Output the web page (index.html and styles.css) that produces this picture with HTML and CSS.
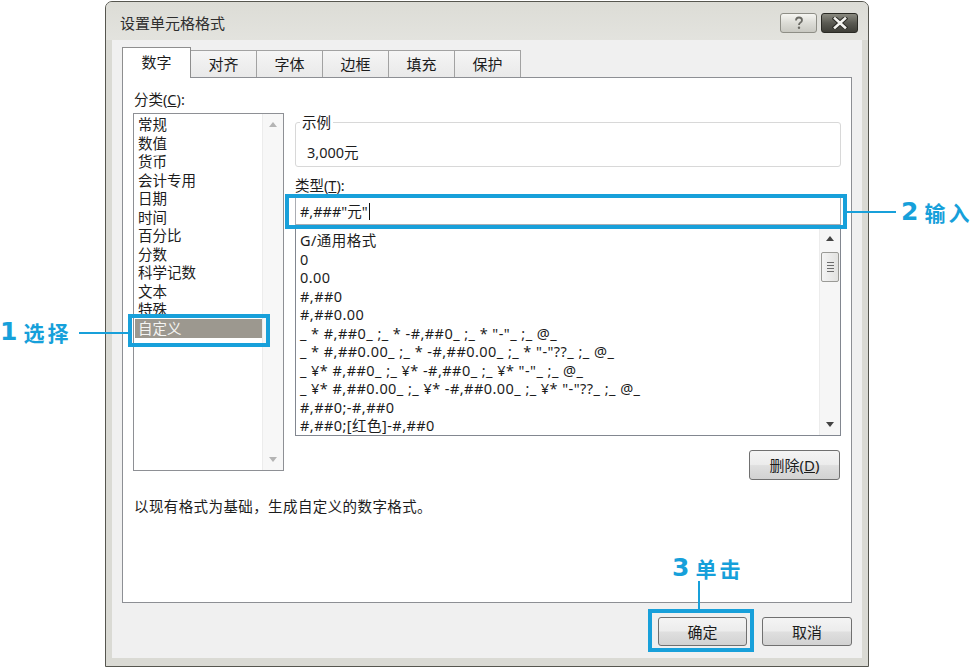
FILE: index.html
```html
<!DOCTYPE html>
<html lang="zh-CN">
<head>
<meta charset="utf-8">
<title>设置单元格格式</title>
<link rel="stylesheet" href="styles.css">
</head>
<body>
<div class="stage">
  <div class="window">
    <div class="titlebar">
      <div class="title">设置单元格格式</div>
      <div class="tbtn help">
        <svg width="12" height="14" viewBox="0 0 12 14"><path d="M3 4.5 Q3 1.5 6 1.5 Q9 1.5 9 4.2 Q9 6 7 7 Q6 7.6 6 9" fill="none" stroke="#6a6a64" stroke-width="1.8"/><circle cx="6" cy="11.8" r="1.2" fill="#6a6a64"/></svg>
      </div>
      <div class="tbtn close">
        <svg width="16" height="12" viewBox="0 0 16 12"><path d="M3 1.5 L13 10.5 M13 1.5 L3 10.5" stroke="#2c2c26" stroke-width="4.6" stroke-linecap="square"/><path d="M3 1.5 L13 10.5 M13 1.5 L3 10.5" stroke="#f4f4f0" stroke-width="2.6" stroke-linecap="square"/></svg>
      </div>
    </div>
    <div class="client">
      <div class="tabs">
        <div class="tab active">数字</div>
        <div class="tab">对齐</div>
        <div class="tab">字体</div>
        <div class="tab">边框</div>
        <div class="tab">填充</div>
        <div class="tab">保护</div>
      </div>
      <div class="panel">
        <div class="label">分类(<u>C</u>):</div>
        <div class="cols">
          <div class="catlist">
            <div class="items">
              <div class="item">常规</div>
              <div class="item">数值</div>
              <div class="item">货币</div>
              <div class="item">会计专用</div>
              <div class="item">日期</div>
              <div class="item">时间</div>
              <div class="item">百分比</div>
              <div class="item">分数</div>
              <div class="item">科学记数</div>
              <div class="item">文本</div>
              <div class="item">特殊</div>
              <div class="item sel">自定义</div>
            </div>
            <div class="vscroll light">
              <div class="arrow"><svg width="8" height="5" viewBox="0 0 8 5"><path d="M0 5 L4 0 L8 5Z" fill="#b4b4b4"/></svg></div>
              <div class="track"></div>
              <div class="arrow"><svg width="8" height="5" viewBox="0 0 8 5"><path d="M0 0 L4 5 L8 0Z" fill="#b4b4b4"/></svg></div>
            </div>
          </div>
          <div class="right">
            <fieldset class="sample">
              <legend>示例</legend>
              <div class="value">3,000元</div>
            </fieldset>
            <div class="label typelabel">类型(<u>T</u>):</div>
            <div class="input">#,###"元"<span class="caret"></span></div>
            <div class="fmtlist">
              <div class="fitems">
                <div class="fitem">G/通用格式</div>
                <div class="fitem">0</div>
                <div class="fitem">0.00</div>
                <div class="fitem">#,##0</div>
                <div class="fitem">#,##0.00</div>
                <div class="fitem">_ * #,##0_ ;_ * -#,##0_ ;_ * "-"_ ;_ @_</div>
                <div class="fitem">_ * #,##0.00_ ;_ * -#,##0.00_ ;_ * "-"??_ ;_ @_</div>
                <div class="fitem">_ ¥* #,##0_ ;_ ¥* -#,##0_ ;_ ¥* "-"_ ;_ @_</div>
                <div class="fitem">_ ¥* #,##0.00_ ;_ ¥* -#,##0.00_ ;_ ¥* "-"??_ ;_ @_</div>
                <div class="fitem">#,##0;-#,##0</div>
                <div class="fitem">#,##0;[红色]-#,##0</div>
              </div>
              <div class="vscroll">
                <div class="arrow"><svg width="8" height="5" viewBox="0 0 8 5"><path d="M0 5 L4 0 L8 5Z" fill="#444"/></svg></div>
                <div class="track">
                  <div class="thumb"><span></span><span></span><span></span><span></span></div>
                </div>
                <div class="arrow"><svg width="8" height="5" viewBox="0 0 8 5"><path d="M0 0 L4 5 L8 0Z" fill="#444"/></svg></div>
              </div>
            </div>
            <div class="btn delete">删除(<u>D</u>)</div>
          </div>
        </div>
        <div class="desc">以现有格式为基础，生成自定义的数字格式。</div>
      </div>
      <div class="buttons">
        <div class="btn ok">确定</div>
        <div class="btn cancel">取消</div>
      </div>
    </div>
  </div>

  <div class="hl hl1"></div>
  <div class="hline hline1"></div>
  <div class="anno anno1"><span class="num">1</span><span class="word">选择</span></div>

  <div class="hl hl2"></div>
  <div class="hline hline2"></div>
  <div class="anno anno2"><span class="num">2</span><span class="word">输入</span></div>

  <div class="hl hl3"></div>
  <div class="vline vline3"></div>
  <div class="anno anno3"><span class="num">3</span><span class="word">单击</span></div>
</div>
</body>
</html>
```
FILE: styles.css
```css
* { box-sizing: border-box; }
body {
  margin: 0;
  background: #fff;
  font-family: "Noto Sans", "Noto Sans CJK SC", sans-serif;
  color: #1c1c1c;
}
.stage {
  position: relative;
  width: 973px;
  height: 668px;
  overflow: hidden;
  background: #fff;
}
.window {
  margin: 1px 0 0 105px;
  width: 764px;
  height: 666px;
  border: 1px solid #56564f;
  border-radius: 7px 7px 0 0;
  background: #dadad4;
  padding: 0 6px 8px 6px;
  display: flex;
  flex-direction: column;
}
.titlebar {
  height: 38px;
  display: flex;
  align-items: flex-start;
  gap: 4px;
  background: linear-gradient(#dcdcd6, #e3e3de);
  margin: 0 -6px;
  padding-left: 14px;
  padding-right: 10px;
  border-radius: 6px 6px 0 0;
}
.title {
  flex: 1;
  font-size: 15px;
  line-height: 18px;
  margin-top: 12px;
  color: #2e2e2e;
}
.tbtn {
  margin-top: 11px;
  width: 37px;
  height: 20px;
  border-radius: 3px;
  display: flex;
  align-items: center;
  justify-content: center;
}
.tbtn.help {
  border: 1px solid #8e8e86;
  background: linear-gradient(#f6f6f2, #dcdcd6 50%, #c9c9c2);
}
.tbtn.close {
  border: 1px solid #2a2a24;
  background: linear-gradient(#8a8a80, #5a5a52 50%, #3e3e37);
}
.client {
  flex: 1;
  background: #f0f0f0;
  padding: 7px 10px 12px 10px;
  display: flex;
  flex-direction: column;
}
.tabs {
  display: flex;
  align-items: flex-end;
  height: 30px;
}
.tab {
  width: 67px;
  height: 27px;
  margin-left: -1px;
  border: 1px solid #a2a2a2;
  border-bottom: none;
  background: linear-gradient(#f5f5f5, #e9e9e9);
  display: flex;
  align-items: center;
  justify-content: center;
  font-size: 15px;
  line-height: 18px;
}
.tab.active {
  width: 69px;
  height: 31px;
  margin-left: 0;
  margin-bottom: -1px;
  background: #fff;
  border-color: #8e8e8e;
  position: relative;
  z-index: 1;
  padding-bottom: 2px;
}
.panel {
  height: 526px;
  background: #fff;
  border: 1px solid #8d8f94;
  padding: 12px 9px 0 10px;
}
.label {
  font-size: 14.5px;
  line-height: 18px;
  padding-left: 1px;
  margin-bottom: 5px;
}
.cols {
  display: grid;
  grid-template-columns: 151px 546px;
  column-gap: 11px;
  align-items: start;
}
.catlist {
  height: 358px;
  border: 1px solid #8e9095;
  display: flex;
}
.items {
  flex: 1;
  padding: 1px 0 0 1px;
}
.item {
  font-size: 14.5px;
  line-height: 18.55px;
  padding-left: 3px;
  white-space: nowrap;
}
.item.sel {
  background: #9c988f;
  color: #f4f4f2;
}
.vscroll {
  width: 21px;
  display: flex;
  flex-direction: column;
  background: #f6f6f6;
  border-left: 1px solid #ececec;
}
.vscroll.light { background: #f7f7f7; }
.vscroll .arrow {
  height: 21px;
  display: flex;
  align-items: center;
  justify-content: center;
}
.vscroll .track {
  flex: 1;
  padding-top: 3px;
}
.thumb {
  margin: 0 1px;
  height: 30px;
  border: 1px solid #9a9a96;
  border-radius: 2px;
  background: linear-gradient(90deg, #f4f4f4, #e2e2e0);
  display: flex;
  flex-direction: column;
  align-items: center;
  justify-content: center;
  gap: 2px;
}
.thumb span {
  display: block;
  width: 7px;
  height: 1px;
  background: #6c6c6c;
}
.right {
  display: flex;
  flex-direction: column;
}
.sample {
  margin: 0;
  min-inline-size: 0;
  border: 1px solid #d8d8d8;
  border-radius: 3px;
  padding: 12px 10px 5px 11px;
}
.sample legend {
  font-size: 14.5px;
  line-height: 18px;
  padding: 0 2px;
  margin-left: -7px;
}
.value {
  font-size: 14.5px;
  line-height: 18px;
}
.typelabel {
  margin-top: 9px;
  margin-bottom: 3px;
  padding-left: 0;
}
.input {
  height: 28px;
  border: 1px solid #abadb3;
  padding-left: 4px;
  font-size: 14.5px;
  line-height: 26px;
  display: flex;
  align-items: center;
  white-space: pre;
}
.caret {
  display: inline-block;
  width: 1px;
  height: 17px;
  background: #111;
  margin-left: 1px;
}
.fmtlist {
  margin-top: 2px;
  height: 209px;
  border: 1px solid #828790;
  display: flex;
}
.fitems {
  flex: 1;
  padding: 3px 0 0 4px;
  overflow: hidden;
}
.fitem {
  font-size: 14.5px;
  line-height: 18.5px;
  letter-spacing: 0.45px;
  white-space: pre;
}
.btn {
  height: 29px;
  border: 1px solid #707070;
  border-radius: 3px;
  background: linear-gradient(#f4f4f4, #ececec 48%, #dfdfdf 52%, #d2d2d2);
  display: flex;
  align-items: center;
  justify-content: center;
  font-size: 15px;
  line-height: 18px;
}
.delete {
  margin-top: 14px;
  align-self: flex-end;
  width: 91px;
  height: 30px;
  margin-right: 1px;
}
.desc {
  margin-top: 17px;
  padding-left: 1px;
  font-size: 14.5px;
  line-height: 18px;
  letter-spacing: 0.4px;
}
.buttons {
  margin-top: 14px;
  display: flex;
  justify-content: flex-end;
  gap: 15px;
}
.ok { width: 89px; }
.cancel { width: 90px; }

/* annotations */
.hl {
  position: absolute;
  border: 4px solid #18a0da;
}
.hl1 { left: 128px; top: 314px; width: 142px; height: 33px; }
.hl2 { left: 285px; top: 194px; width: 562px; height: 35px; }
.hl3 { left: 648px; top: 609px; width: 106px; height: 43px; }
.hline {
  position: absolute;
  height: 2px;
  background: #18a0da;
}
.hline1 { left: 79px; top: 332px; width: 50px; }
.hline2 { left: 846px; top: 211px; width: 50px; }
.vline {
  position: absolute;
  width: 2px;
  background: #18a0da;
}
.vline3 { left: 698px; top: 581px; height: 29px; }
.anno {
  position: absolute;
  display: flex;
  align-items: center;
  gap: 6px;
  color: #16a0da;
  height: 28px;
}
.anno .num {
  font-family: "DejaVu Sans", "Liberation Sans", sans-serif;
  font-weight: 700;
  font-size: 25px;
  line-height: 28px;
}
.anno .word {
  font-family: "Noto Sans CJK SC", sans-serif;
  font-weight: 700;
  font-size: 21px;
  line-height: 28px;
  letter-spacing: 3px;
}
.anno1 { left: 0px; top: 318px; }
.anno2 { left: 901px; top: 198px; }
.anno3 { left: 672px; top: 554px; }
```
